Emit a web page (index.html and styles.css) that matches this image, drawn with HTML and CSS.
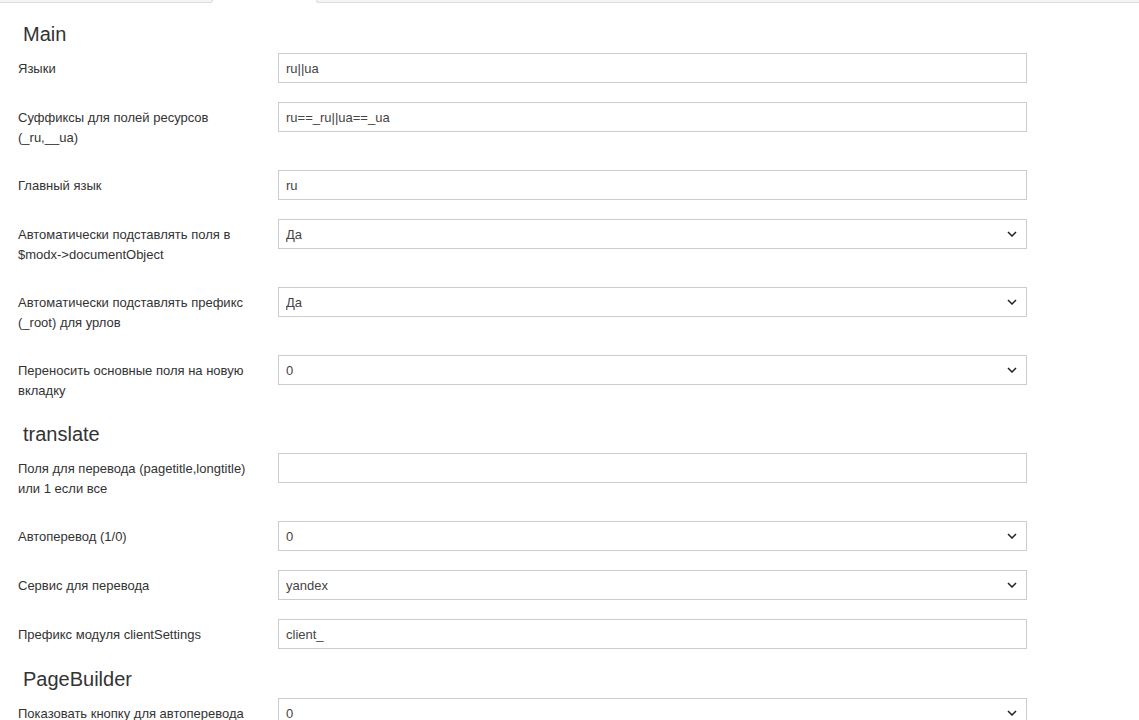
FILE: index.html
```
<!DOCTYPE html>
<html lang="ru">
<head>
<meta charset="utf-8">
<title>Settings</title>
<link rel="stylesheet" href="styles.css">
</head>
<body>
<div class="tabs">
  <div class="tab tab-left"></div>
  <div class="tab-active"></div>
  <div class="tab tab-right"></div>
</div>
<div class="page">
  <h3 class="section first">Main</h3>
  <div class="row">
    <label class="lbl">Языки</label>
    <div class="ctl"><input class="field" type="text" value="ru||ua"></div>
  </div>
  <div class="row">
    <label class="lbl">Суффиксы для полей ресурсов (_ru,__ua)</label>
    <div class="ctl"><input class="field" type="text" value="ru==_ru||ua==_ua"></div>
  </div>
  <div class="row">
    <label class="lbl">Главный язык</label>
    <div class="ctl"><input class="field" type="text" value="ru"></div>
  </div>
  <div class="row">
    <label class="lbl">Автоматически подставлять поля в $modx-&gt;documentObject</label>
    <div class="ctl sel"><select class="field"><option>Да</option></select><svg class="chev" width="10" height="6" viewBox="0 0 10 6"><path d="M1 1l4 4 4-4" fill="none" stroke="#222" stroke-width="1.5"/></svg></div>
  </div>
  <div class="row">
    <label class="lbl">Автоматически подставлять префикс (_root) для урлов</label>
    <div class="ctl sel"><select class="field"><option>Да</option></select><svg class="chev" width="10" height="6" viewBox="0 0 10 6"><path d="M1 1l4 4 4-4" fill="none" stroke="#222" stroke-width="1.5"/></svg></div>
  </div>
  <div class="row">
    <label class="lbl">Переносить основные поля на новую вкладку</label>
    <div class="ctl sel"><select class="field"><option>0</option></select><svg class="chev" width="10" height="6" viewBox="0 0 10 6"><path d="M1 1l4 4 4-4" fill="none" stroke="#222" stroke-width="1.5"/></svg></div>
  </div>

  <h3 class="section">translate</h3>
  <div class="row">
    <label class="lbl">Поля для перевода (pagetitle,longtitle) или 1 если все</label>
    <div class="ctl"><input class="field" type="text" value=""></div>
  </div>
  <div class="row">
    <label class="lbl">Автоперевод (1/0)</label>
    <div class="ctl sel"><select class="field"><option>0</option></select><svg class="chev" width="10" height="6" viewBox="0 0 10 6"><path d="M1 1l4 4 4-4" fill="none" stroke="#222" stroke-width="1.5"/></svg></div>
  </div>
  <div class="row">
    <label class="lbl">Сервис для перевода</label>
    <div class="ctl sel"><select class="field"><option>yandex</option></select><svg class="chev" width="10" height="6" viewBox="0 0 10 6"><path d="M1 1l4 4 4-4" fill="none" stroke="#222" stroke-width="1.5"/></svg></div>
  </div>
  <div class="row">
    <label class="lbl">Префикс модуля clientSettings</label>
    <div class="ctl"><input class="field" type="text" value="client_"></div>
  </div>

  <h3 class="section">PageBuilder</h3>
  <div class="row">
    <label class="lbl">Показовать кнопку для автоперевода</label>
    <div class="ctl sel"><select class="field"><option>0</option></select><svg class="chev" width="10" height="6" viewBox="0 0 10 6"><path d="M1 1l4 4 4-4" fill="none" stroke="#222" stroke-width="1.5"/></svg></div>
  </div>
</div>
</body>
</html>
```
FILE: styles.css
```
* { box-sizing: border-box; }
html, body {
  margin: 0;
  padding: 0;
  background: #fff;
  font-family: "Liberation Sans", Arial, sans-serif;
  color: #333;
  overflow: hidden;
}
.tabs {
  display: flex;
  height: 3px;
}
.tab {
  height: 3px;
  background: #f4f4f4;
  border-bottom: 1px solid #dcdcdc;
}
.tab-left {
  width: 213px;
  border-right: 1px solid #dcdcdc;
  border-bottom-right-radius: 3px;
}
.tab-active {
  width: 103px;
}
.tab-right {
  flex: 1;
  border-left: 1px solid #dcdcdc;
  border-bottom-left-radius: 3px;
}
.page {
  padding: 20px 18px 0 18px;
}
.section {
  margin: 0 0 8px 5px;
  font-size: 20px;
  line-height: 22px;
  font-weight: normal;
  color: #333;
}
.row {
  display: flex;
  margin-bottom: 19px;
}
.lbl {
  width: 260px;
  flex: none;
  padding: 6px 20px 3px 0;
  font-size: 13px;
  line-height: 20px;
  color: #333;
}
.ctl {
  position: relative;
  width: 749px;
  flex: none;
}
.field {
  display: block;
  width: 100%;
  height: 30px;
  margin: 0;
  padding: 0 7px;
  border: 1px solid #ccc;
  border-radius: 0;
  background: #fff;
  font-family: "Liberation Sans", Arial, sans-serif;
  font-size: 13px;
  color: #444;
  outline: none;
  -webkit-appearance: none;
  appearance: none;
}
.chev {
  position: absolute;
  right: 10px;
  top: 12px;
  pointer-events: none;
}
```
